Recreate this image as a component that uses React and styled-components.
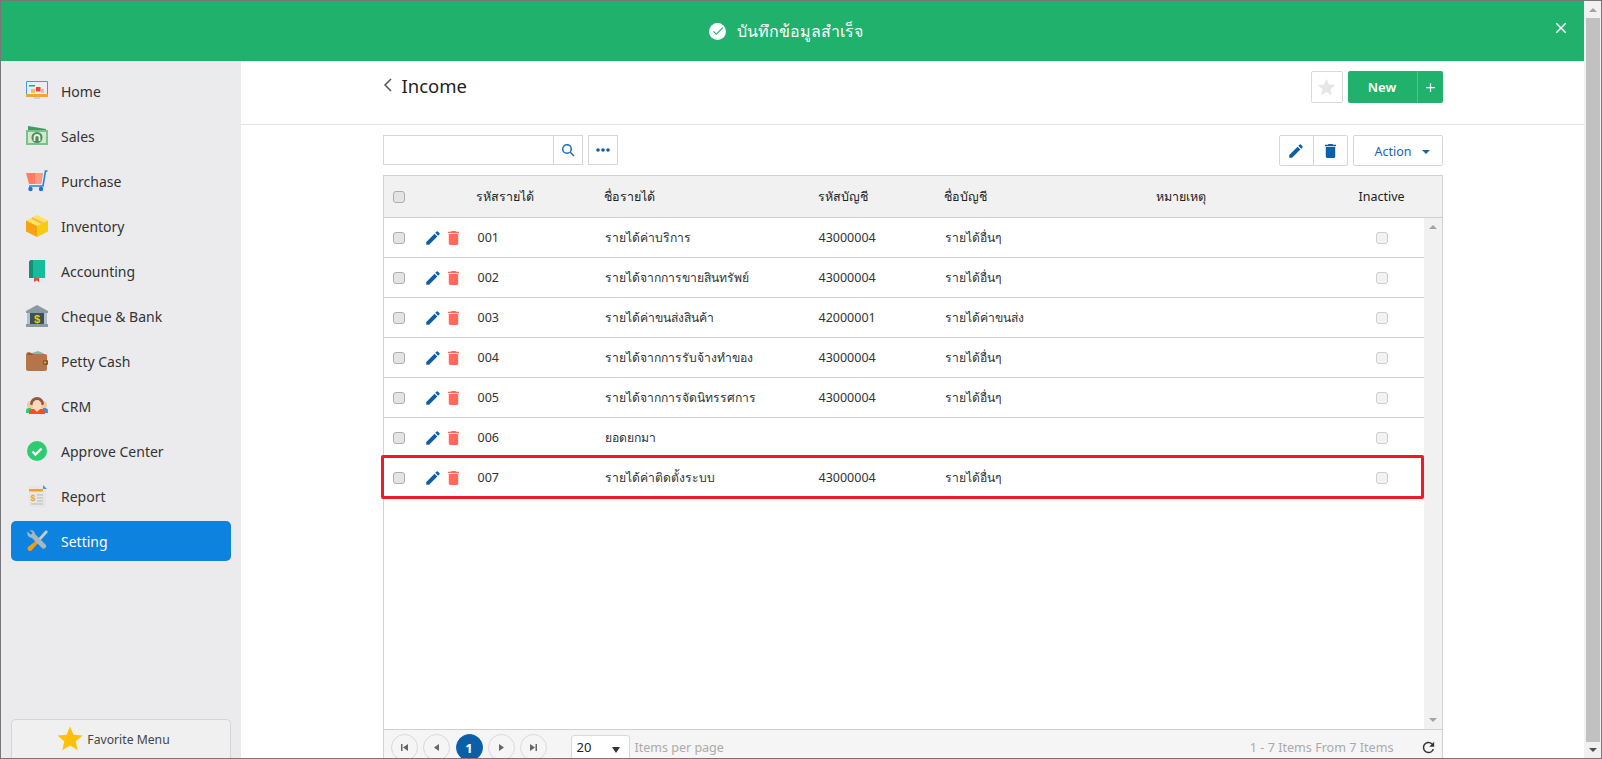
import React from "react";
import styled, { createGlobalStyle } from "styled-components";
import { MdEdit, MdStar, MdCheck, MdClose, MdAdd, MdRefresh } from "react-icons/md";

const GlobalStyle = createGlobalStyle`
  html, body { margin: 0; height: 100%; overflow: hidden; }
  body { font-family: "Noto Sans", "Open Sans", "DejaVu Sans", sans-serif; color: #333; background: #fff; }
  * { box-sizing: border-box; }
`;

const menu = [
  { label: "Home", icon: "home" },
  { label: "Sales", icon: "sales" },
  { label: "Purchase", icon: "cart" },
  { label: "Inventory", icon: "box" },
  { label: "Accounting", icon: "book" },
  { label: "Cheque & Bank", icon: "bank" },
  { label: "Petty Cash", icon: "wallet" },
  { label: "CRM", icon: "crm" },
  { label: "Approve Center", icon: "approve" },
  { label: "Report", icon: "report" },
  { label: "Setting", icon: "setting", active: true },
];

const rows = [
  { code: "001", name: "รายได้ค่าบริการ", acc: "43000004", accName: "รายได้อื่นๆ" },
  { code: "002", name: "รายได้จากการขายสินทรัพย์", acc: "43000004", accName: "รายได้อื่นๆ" },
  { code: "003", name: "รายได้ค่าขนส่งสินค้า", acc: "42000001", accName: "รายได้ค่าขนส่ง" },
  { code: "004", name: "รายได้จากการรับจ้างทำของ", acc: "43000004", accName: "รายได้อื่นๆ" },
  { code: "005", name: "รายได้จากการจัดนิทรรศการ", acc: "43000004", accName: "รายได้อื่นๆ" },
  { code: "006", name: "ยอดยกมา", acc: "", accName: "" },
  { code: "007", name: "รายได้ค่าติดตั้งระบบ", acc: "43000004", accName: "รายได้อื่นๆ", marked: true },
];

const MenuIcon = ({ name }) => {
  switch (name) {
    case "home":
      return (
        <svg viewBox="0 0 22 20" width="22" height="20">
          <rect x="0" y="0" width="22" height="15" rx="1" fill="#4a9ad8" />
          <rect x="1" y="1" width="20" height="12" fill="#e8eef2" />
          <rect x="0" y="13" width="22" height="3" fill="#f5a33b" />
          <rect x="8" y="16" width="6" height="2" fill="#c5d5dd" />
          <rect x="3" y="4" width="6" height="1.5" fill="#2a9d9d" />
          <rect x="10" y="6" width="4.500" height="4.500" fill="#e8443a" />
          <rect x="5" y="8" width="4" height="4" fill="#f6c244" />
          <rect x="15" y="8" width="3" height="4" fill="#f4b6a8" />
        </svg>
      );
    case "sales":
      return (
        <svg viewBox="0 0 22 20" width="22" height="20">
          <path d="M2 0l18 3v3H2z" fill="#3f9a63" />
          <rect x="0" y="4" width="22" height="15" fill="#7cc08f" />
          <rect x="2" y="6" width="18" height="11" fill="#d5e8c9" />
          <circle cx="11" cy="11.500" r="5.500" fill="#4d8a5f" />
          <path d="M8.500 15v-3.500a2.500 2.500 0 0 1 5 0V15" fill="none" stroke="#e6f1dc" strokeWidth="1.800" />
        </svg>
      );
    case "cart":
      return (
        <svg viewBox="0 0 22 22" width="22" height="22">
          <path d="M0 3h17l-2 11H3z" fill="#ff7b63" />
          <path d="M9 3h8l-2 11H9z" fill="#ff9a80" />
          <path d="M21.500 1h-2L17 16H3" fill="none" stroke="#2b7de9" strokeWidth="1.600" />
          <circle cx="4.500" cy="19" r="2.200" fill="#1e6fe0" />
          <circle cx="15" cy="19" r="2.200" fill="#1e6fe0" />
        </svg>
      );
    case "box":
      return (
        <svg viewBox="0 0 22 22" width="22" height="22">
          <path d="M11 0l11 5.500-11 5.500L0 5.500z" fill="#ffe066" />
          <path d="M0 5.500l11 5.500v11L0 16.500z" fill="#f7a311" />
          <path d="M22 5.500L11 11v11l11-5.500z" fill="#f6cb12" />
          <path d="M6 3l11 5.500" stroke="#f0c040" strokeWidth="2" />
        </svg>
      );
    case "book":
      return (
        <svg viewBox="0 0 22 22" width="22" height="22">
          <path d="M3 3a3 3 0 0 1 3-3h13v19H3z" fill="#17bc9c" />
          <path d="M3 3a3 3 0 0 1 3-3h1v19H3z" fill="#148f77" />
          <rect x="3" y="18" width="16" height="3" fill="#d9efe9" />
          <path d="M8 18h5v4l-2.500-1.500L8 22z" fill="#e74c3c" />
        </svg>
      );
    case "bank":
      return (
        <svg viewBox="0 0 22 22" width="22" height="22">
          <path d="M11 0l11 6v2H0V6z" fill="#8a9aa3" />
          <rect x="1" y="8" width="3" height="11" fill="#b3c0c6" />
          <rect x="18" y="8" width="3" height="11" fill="#b3c0c6" />
          <rect x="4" y="8" width="14" height="11" fill="#3d4f58" />
          <rect x="0" y="19" width="22" height="3" fill="#8a9aa3" />
          <text x="11" y="17.500" textAnchor="middle" fontSize="11" fontWeight="700" fill="#f1c40f" fontFamily="Liberation Sans">$</text>
        </svg>
      );
    case "wallet":
      return (
        <svg viewBox="0 0 22 20" width="22" height="20">
          <path d="M3 3l6-2 3-1 5 2 2 2H3z" fill="#74c2a5" />
          <path d="M0 4a3 3 0 0 1 3-3l5 2h11a2 2 0 0 1 2 2v13a2 2 0 0 1-2 2H2a2 2 0 0 1-2-2z" fill="#b5754a" />
          <path d="M1 3c1-1 3-1 5 0l2 1H2z" fill="#8c5632" />
          <rect x="17" y="9" width="5" height="5" rx="1" fill="#8c5632" />
          <circle cx="19" cy="11.500" r="1" fill="#f1c40f" />
        </svg>
      );
    case "crm":
      return (
        <svg viewBox="0 0 22 20" width="22" height="20">
          <circle cx="5" cy="9" r="4" fill="#f3c7a0" />
          <circle cx="17" cy="9" r="4" fill="#f3c7a0" />
          <path d="M0 17v-2a3 3 0 0 1 3-3h2v5z" fill="#2ecc71" />
          <path d="M22 17v-2a3 3 0 0 0-3-3h-2v5z" fill="#3498db" />
          <path d="M4 8a7 7 0 0 1 14 0l-1 1H5z" fill="#8d5a44" />
          <ellipse cx="11" cy="9" rx="4.500" ry="5" fill="#ffd9b8" />
          <path d="M3 18v-2a3 3 0 0 1 3-3h10a3 3 0 0 1 3 3v2z" fill="#f4511e" />
          <path d="M8 13h6l-3 3z" fill="#ffd9b8" />
        </svg>
      );
    case "approve":
      return (
        <svg viewBox="0 0 22 22" width="22" height="22">
          <circle cx="11" cy="11" r="10" fill="#2ecc71" />
          <path d="M6.500 11.500l3 3 6-6" fill="none" stroke="#fff" strokeWidth="2.400" />
        </svg>
      );
    case "report":
      return (
        <svg viewBox="0 0 22 22" width="22" height="22">
          <rect x="3" y="1" width="17" height="21" fill="#e6e6e6" />
          <rect x="3" y="4" width="14" height="2.500" fill="#f0a030" />
          <path d="M17 0l4 4h-4z" fill="#4a9ad8" />
          <text x="7" y="16" textAnchor="middle" fontSize="9" fontWeight="700" fill="#f0a030" fontFamily="Liberation Sans">$</text>
          <path d="M11 10h6M11 13h6M11 16h6M5 19h12" stroke="#b9b9b9" strokeWidth="1" />
        </svg>
      );
    case "setting":
      return (
        <svg viewBox="0 0 22 22" width="22" height="22">
          <path d="M20 0l2 2-9 10-2-2z" fill="#c3ced3" />
          <path d="M11 10l2 2-7.500 8.500a2.500 2.500 0 0 1-3.500-3.500z" fill="#f39c12" />
          <path d="M1.500 1.500l3 3 1.500-.5.500-1.500-3-2c2.500-1 5.500.5 5.500 3.500l11 11c1 2-1.500 4.500-3.500 3.500L6 8c-3 0-5.500-3-4.500-6.500z" fill="#a8b6bd" />
        </svg>
      );
    default:
      return null;
  }
};

const PencilIcon = () => <MdEdit size={18} />;

const TrashIcon = ({ color }) => (
  <svg viewBox="5 3 14 18" width="11" height="14" preserveAspectRatio="none" fill={color}>
    <path d="M6 19c0 1.100.9 2 2 2h8c1.100 0 2-.9 2-2V7H6v12zM19 4h-3.500l-1-1h-5l-1 1H5v2h14V4z" />
  </svg>
);

const Pager = ({ kind }) => (
  <svg width="9" height="9" viewBox="0 0 9 9" fill="#666">
    {kind === "first" && <path d="M1 1h1.500v7H1zM8 1v7L3 4.500z" />}
    {kind === "prev" && <path d="M7 1v7L2 4.500z" />}
    {kind === "next" && <path d="M2 1v7l5-3.500z" />}
    {kind === "last" && <path d="M8 1H6.500v7H8zM1 1v7l5-3.500z" />}
  </svg>
);

export default function App() {
  return (
    <Frame>
      <GlobalStyle />
      <Toast>
        <ToastCheck><MdCheck size={14} /></ToastCheck>
        <span>บันทึกข้อมูลสำเร็จ</span>
        <ToastClose><MdClose size={18} /></ToastClose>
      </Toast>

      <Sidebar>
        <MenuList>
          {menu.map((m) => (
            <MenuItem key={m.label} $active={m.active}>
              <IconSlot><MenuIcon name={m.icon} /></IconSlot>
              {m.label}
            </MenuItem>
          ))}
        </MenuList>
        <FavoriteButton>
          <MdStar size={30} color="#ffc107" />
          Favorite Menu
        </FavoriteButton>
      </Sidebar>

      <Main>
        <Header>
          <HeaderInner>
            <Title>
              <svg width="10" height="14" viewBox="0 0 10 14" fill="none" stroke="#555" strokeWidth="1.500">
                <path d="M8 1L2 7l6 6" />
              </svg>
              Income
            </Title>
            <HeaderActions>
              <StarButton><MdStar size={21} color="#e6e6e6" /></StarButton>
              <NewButton>
                <NewLabel>New</NewLabel>
                <NewPlus><MdAdd size={15} /></NewPlus>
              </NewButton>
            </HeaderActions>
          </HeaderInner>
        </Header>

        <Content>
          <Toolbar>
            <SearchBox>
              <SearchInput />
              <SearchButton>
                <svg width="14" height="14" viewBox="0 0 14 14" fill="none" stroke="#1a6fb5" strokeWidth="1.500">
                  <circle cx="6" cy="6" r="4.300" />
                  <path d="M9.200 9.200L13 13" />
                </svg>
              </SearchButton>
            </SearchBox>
            <DotsButton>
              <svg width="14" height="4" viewBox="0 0 14 4" fill="#0b5fa8">
                <circle cx="2" cy="2" r="1.800" />
                <circle cx="7" cy="2" r="1.800" />
                <circle cx="12" cy="2" r="1.800" />
              </svg>
            </DotsButton>
            <ToolbarRight>
              <ButtonGroup>
                <GroupButton><PencilIcon /></GroupButton>
                <GroupButton><TrashIcon color="#0b5fa8" /></GroupButton>
              </ButtonGroup>
              <ActionButton>
                Action
                <Caret />
              </ActionButton>
            </ToolbarRight>
          </Toolbar>

          <TablePanel>
            <HeadRow>
              <Cell><Check /></Cell>
              <span />
              <FirstHeadCell>รหัสรายได้</FirstHeadCell>
              <HeadCell>ชื่อรายได้</HeadCell>
              <HeadCell>รหัสบัญชี</HeadCell>
              <HeadCell>ชื่อบัญชี</HeadCell>
              <HeadCell>หมายเหตุ</HeadCell>
              <Cell $center>Inactive</Cell>
            </HeadRow>
            <TableBody>
              <RowList>
                {rows.map((r) => (
                  <Row key={r.code} $marked={r.marked}>
                    <Cell><Check /></Cell>
                    <RowIcons>
                      <PencilIcon />
                      <TrashIcon color="#ff6a5a" />
                    </RowIcons>
                    <Cell>{r.code}</Cell>
                    <NameCell>{r.name}</NameCell>
                    <Cell>{r.acc}</Cell>
                    <NameCell>{r.accName}</NameCell>
                    <span />
                    <Cell $center><Check $light /></Cell>
                  </Row>
                ))}
              </RowList>
              <InnerScroll>
                <ArrowUp />
                <ArrowDown />
              </InnerScroll>
            </TableBody>
            <Footer>
              <PagerCircle><Pager kind="first" /></PagerCircle>
              <PagerCircle><Pager kind="prev" /></PagerCircle>
              <PagerCircle $active>1</PagerCircle>
              <PagerCircle><Pager kind="next" /></PagerCircle>
              <PagerCircle><Pager kind="last" /></PagerCircle>
              <PageSize>
                20
                <SizeCaret />
              </PageSize>
              <FooterNote>Items per page</FooterNote>
              <FooterCount>1 - 7 Items From 7 Items</FooterCount>
              <Reload><MdRefresh size={17} /></Reload>
            </Footer>
          </TablePanel>
        </Content>
      </Main>

      <PageScroll>
        <ArrowUp />
        <PageThumb />
        <ArrowDown $dark />
      </PageScroll>
    </Frame>
  );
}

const Frame = styled.div`
  position: relative;
  display: flex;
  height: 100vh;
  border: 1px solid #777;
  overflow: hidden;
`;

const Toast = styled.div`
  position: absolute;
  top: 0;
  left: 0;
  right: 17px;
  height: 60px;
  z-index: 10;
  background: #20b16c;
  color: #fff;
  font-size: 16px;
  display: flex;
  align-items: center;
  justify-content: center;
  gap: 11px;
  padding-right: 13px;
`;

const ToastCheck = styled.span`
  width: 17px;
  height: 17px;
  border-radius: 50%;
  background: #fff;
  color: #20b16c;
  display: flex;
  align-items: center;
  justify-content: center;
`;

const ToastClose = styled.span`
  position: absolute;
  right: 14px;
  top: 18px;
  display: flex;
`;

const Sidebar = styled.aside`
  width: 240px;
  flex: none;
  background: #ebebed;
  padding: 70px 10px 0;
  display: flex;
  flex-direction: column;
`;

const MenuList = styled.nav`
  flex: 1;
  display: flex;
  flex-direction: column;
  gap: 5px;
`;

const MenuItem = styled.div`
  height: 40px;
  display: flex;
  align-items: center;
  gap: 13px;
  padding-left: 15px;
  border-radius: 5px;
  font-size: 14px;
  color: ${(p) => (p.$active ? "#fff" : "#333")};
  background: ${(p) => (p.$active ? "#0d82df" : "transparent")};
`;

const IconSlot = styled.span`
  width: 22px;
  height: 22px;
  display: flex;
  align-items: center;
  justify-content: center;
`;

const FavoriteButton = styled.div`
  height: 39px;
  display: flex;
  align-items: center;
  justify-content: center;
  gap: 2px;
  padding-right: 17px;
  font-size: 12.2px;
  color: #444;
  background: #f0f0f1;
  border: 1px solid #d5d5d5;
  border-bottom: 0;
  border-radius: 5px 5px 0 0;
`;

const Main = styled.main`
  flex: 1;
  min-width: 0;
  display: flex;
  flex-direction: column;
`;

const Header = styled.header`
  height: 124px;
  flex: none;
  border-bottom: 1px solid #e3e3e3;
`;

const HeaderInner = styled.div`
  width: 1060px;
  margin: 0 auto;
  padding-top: 70px;
  display: flex;
  justify-content: space-between;
`;

const Title = styled.h1`
  margin: 0;
  height: 32px;
  padding-bottom: 4px;
  display: flex;
  align-items: center;
  gap: 9px;
  font-size: 18.5px;
  font-weight: 400;
  color: #222;
`;

const HeaderActions = styled.div`
  display: flex;
  gap: 5px;
`;

const StarButton = styled.div`
  width: 32px;
  height: 32px;
  border: 1px solid #d9d9d9;
  border-radius: 2px;
  display: flex;
  align-items: center;
  justify-content: center;
`;

const NewButton = styled.div`
  width: 95px;
  height: 32px;
  background: #20b16c;
  color: #fff;
  border-radius: 2px;
  display: flex;
  font-size: 13px;
  font-weight: 600;
`;

const NewLabel = styled.span`
  width: 69px;
  display: flex;
  align-items: center;
  justify-content: center;
`;

const NewPlus = styled.span`
  flex: 1;
  border-left: 1px solid #3fcf85;
  display: flex;
  align-items: center;
  justify-content: center;
`;

const Content = styled.div`
  width: 1060px;
  margin: 0 auto;
  flex: 1;
  min-height: 0;
  display: flex;
  flex-direction: column;
  padding-top: 10px;
`;

const Toolbar = styled.div`
  height: 31px;
  display: flex;
  gap: 5px;
  flex: none;
`;

const SearchBox = styled.div`
  width: 200px;
  height: 30px;
  display: flex;
  border: 1px solid #d6d6d6;
`;

const SearchInput = styled.div`
  flex: 1;
`;

const SearchButton = styled.div`
  width: 29px;
  border-left: 1px solid #d6d6d6;
  display: flex;
  align-items: center;
  justify-content: center;
`;

const DotsButton = styled.div`
  width: 30px;
  height: 30px;
  border: 1px solid #d6d6d6;
  display: flex;
  align-items: center;
  justify-content: center;
`;

const ToolbarRight = styled.div`
  margin-left: auto;
  display: flex;
  gap: 5px;
`;

const ButtonGroup = styled.div`
  display: flex;
  border: 1px solid #d6d6d6;
  border-radius: 2px;
`;

const GroupButton = styled.div`
  width: 33.500px;
  display: flex;
  align-items: center;
  justify-content: center;
  color: #0b5fa8;
  & + & {
    border-left: 1px solid #d6d6d6;
  }
`;

const ActionButton = styled.div`
  width: 90px;
  border: 1px solid #d6d6d6;
  border-radius: 2px;
  color: #1a64b0;
  font-size: 12.5px;
  display: flex;
  align-items: center;
  justify-content: flex-end;
  gap: 10px;
  padding: 2px 12px 0 0;
`;

const Caret = styled.span`
  border-left: 4px solid transparent;
  border-right: 4px solid transparent;
  border-top: 4px solid #1a64b0;
`;

const TablePanel = styled.div`
  flex: 1;
  min-height: 0;
  margin-top: 9px;
  border: 1px solid #d2d2d2;
  border-bottom: 0;
  display: flex;
  flex-direction: column;
`;

const columns = "42px 52px 127px 214px 126px 212px 183px 84px";

const HeadRow = styled.div`
  height: 42px;
  flex: none;
  display: grid;
  grid-template-columns: ${columns};
  align-items: center;
  background: #f1f1f1;
  border-bottom: 1px solid #cfcfcf;
  font-size: 12.5px;
  color: #222;
`;

const Cell = styled.div`
  display: flex;
  align-items: center;
  justify-content: ${(p) => (p.$center ? "center" : "flex-start")};
  &:first-child {
    padding-left: 9px;
  }
`;

const HeadCell = styled(Cell)`
  margin-left: -1px;
`;

const FirstHeadCell = styled(Cell)`
  margin-left: -2px;
`;

const NameCell = styled(Cell)`
  font-size: 12.2px;
`;

const Check = styled.span`
  display: block;
  width: 12px;
  height: 12px;
  border-radius: 3px;
  background: ${(p) => (p.$light ? "#f2f2f2" : "#e4e4e4")};
  border: 1px solid ${(p) => (p.$light ? "#cfcfcf" : "#adadad")};
`;

const TableBody = styled.div`
  flex: 1;
  min-height: 0;
  display: flex;
`;

const RowList = styled.div`
  flex: 1;
  min-width: 0;
`;

const Row = styled.div`
  position: relative;
  height: 40px;
  display: grid;
  grid-template-columns: ${columns};
  align-items: center;
  border-bottom: 1px solid ${(p) => (p.$marked ? "transparent" : "#cfcfcf")};
  font-size: 12.5px;
  color: #333;
  ${(p) =>
    p.$marked &&
    `&::after {
      content: "";
      position: absolute;
      inset: -3px 0 -2px -3px;
      border: 3px solid #ed1c24;
      border-radius: 2px;
    }`}
`;

const RowIcons = styled.div`
  display: flex;
  align-items: center;
  gap: 6px;
  color: #0b5fa8;
  margin-left: -2px;
`;

const InnerScroll = styled.div`
  width: 18px;
  flex: none;
  background: #f1f1f1;
  display: flex;
  flex-direction: column;
  justify-content: space-between;
  align-items: center;
  padding: 7px 0;
`;

const ArrowUp = styled.span`
  border-left: 4px solid transparent;
  border-right: 4px solid transparent;
  border-bottom: 4px solid #a3a3a3;
`;

const ArrowDown = styled.span`
  border-left: 4px solid transparent;
  border-right: 4px solid transparent;
  border-top: 4px solid ${(p) => (p.$dark ? "#505050" : "#a3a3a3")};
`;

const Footer = styled.div`
  height: 29px;
  flex: none;
  overflow: hidden;
  position: relative;
  background: #f5f5f5;
  border-top: 1px solid #cfcfcf;
  display: flex;
  align-items: flex-start;
  gap: 5px;
  padding: 4px 8px 0 7px;
  font-size: 12.5px;
  color: #aaa;
`;

const PagerCircle = styled.span`
  width: 27px;
  height: 27px;
  flex: none;
  border-radius: 50%;
  border: 1px solid ${(p) => (p.$active ? "#0b5fa8" : "#d9d9d9")};
  background: ${(p) => (p.$active ? "#0b5fa8" : "#f5f5f5")};
  color: #fff;
  font-size: 13px;
  font-weight: 700;
  display: flex;
  align-items: center;
  justify-content: center;
  margin-left: ${(p) => (p.$active ? "1px" : "0")};
`;

const PageSize = styled.div`
  width: 59px;
  height: 30px;
  margin: 1px 0 0 19px;
  background: #fff;
  border: 1px solid #d9d9d9;
  border-radius: 3px;
  color: #222;
  font-size: 13px;
  display: flex;
  align-items: flex-start;
  justify-content: space-between;
  padding: 2px 9px 0 5px;
`;

const SizeCaret = styled.span`
  margin-top: 9px;
  border-left: 4px solid transparent;
  border-right: 4px solid transparent;
  border-top: 6px solid #333;
`;

const FooterNote = styled.span`
  margin-top: 5px;
`;

const FooterCount = styled.span`
  margin-top: 5px;
  position: absolute;
  right: 48px;
  font-size: 12.6px;
`;

const Reload = styled.span`
  position: absolute;
  top: 9px;
  right: 5px;
  display: flex;
  color: #333;
`;

const PageScroll = styled.div`
  width: 17px;
  flex: none;
  background: #f1f1f1;
  display: flex;
  flex-direction: column;
  align-items: center;
  padding: 7px 0 6px;
`;

const PageThumb = styled.div`
  flex: 1;
  width: 14px;
  margin: 6px 0;
  background: #c1c1c1;
`;
